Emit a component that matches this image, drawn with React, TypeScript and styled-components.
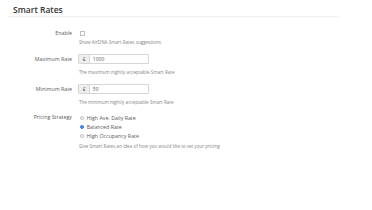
import React from "react";
import styled, { createGlobalStyle } from "styled-components";

const Global = createGlobalStyle`
  html, body { margin: 0; padding: 0; background: #fff; }
  body { font-family: "Open Sans", "Liberation Sans", sans-serif; color: #555; }
`;

const Page = styled.div`
  width: 372px;
  height: 210px;
  box-sizing: border-box;
  padding-top: 4px;
`;

const Header = styled.div`
  margin: 0 33px 0 8px;
  padding-left: 5px;
  border-bottom: 1px solid #f1f1f1;
  box-shadow: 0 1px 1px rgba(0, 0, 0, 0.015);
`;

const Title = styled.h1`
  margin: 0;
  font-size: 8.5px;
  line-height: 12px;
  font-weight: 600;
  color: #333;
`;

const Form = styled.div`
  display: grid;
  grid-template-columns: 72px 1fr;
  column-gap: 7px;
  padding-top: 12.3px;
  align-items: start;
`;

const Label = styled.div<{ $h: number }>`
  text-align: right;
  font-size: 5.3px;
  line-height: ${(p) => p.$h}px;
  color: #5a5a5a;
  white-space: nowrap;
`;

const Field = styled.div<{ $gap?: number }>`
  display: flex;
  flex-direction: column;
  align-items: flex-start;
  margin-bottom: ${(p) => p.$gap ?? 0}px;
`;

const Control = styled.div<{ $h: number }>`
  height: ${(p) => p.$h}px;
  display: flex;
  align-items: center;
`;

const Help = styled.div<{ $top: number }>`
  font-size: 4.6px;
  line-height: 8px;
  color: #858585;
  margin-top: ${(p) => p.$top}px;
  white-space: nowrap;
`;

const Check = styled.span`
  display: block;
  width: 3.2px;
  height: 3.2px;
  margin-left: 1px;
  border: 0.5px solid #bdbdbd;
  border-radius: 0.6px;
  background: #fff;
`;

const InputGroup = styled.div`
  display: flex;
  width: 71px;
  height: 10px;
  box-sizing: border-box;
  margin-left: -0.7px;
  border: 0.5px solid #d6d6d6;
  border-radius: 1px;
  overflow: hidden;
`;

const Addon = styled.span`
  width: 9.5px;
  flex: none;
  background: #efefef;
  border-right: 0.5px solid #d6d6d6;
  font-size: 5px;
  line-height: 9px;
  text-align: center;
  color: #555;
`;

const Value = styled.span`
  font-size: 5px;
  line-height: 9px;
  padding-left: 3px;
  color: #555;
`;

const Radios = styled.div`
  display: flex;
  flex-direction: column;
`;

const RadioRow = styled.label`
  display: flex;
  align-items: center;
  gap: 3px;
  height: 9.3px;
  font-size: 5.3px;
  color: #5a5a5a;
  white-space: nowrap;
`;

const Radio = styled.span<{ $on?: boolean }>`
  width: 4px;
  height: 4px;
  margin-left: 0.7px;
  border-radius: 50%;
  box-sizing: border-box;
  border: 0.5px solid ${(p) => (p.$on ? "#3d86e2" : "#bdbdbd")};
  background: ${(p) => (p.$on ? "#3d86e2" : "#fff")};
`;

export default function App() {
  return (
    <Page>
      <Global />
      <Header>
        <Title>Smart Rates</Title>
      </Header>
      <Form>
        <Label $h={8}>Enable</Label>
        <Field $gap={8}>
          <Control $h={8}>
            <Check />
          </Control>
          <Help $top={1}>Show AirDNA Smart Rates suggestions</Help>
        </Field>

        <Label $h={10}>Maximum Rate</Label>
        <Field $gap={8.6}>
          <Control $h={10}>
            <InputGroup>
              <Addon>£</Addon>
              <Value>1000</Value>
            </InputGroup>
          </Control>
          <Help $top={3.4}>The maximum nightly acceptable Smart Rate</Help>
        </Field>

        <Label $h={10}>Minimum Rate</Label>
        <Field $gap={7.3}>
          <Control $h={10}>
            <InputGroup>
              <Addon>£</Addon>
              <Value>50</Value>
            </InputGroup>
          </Control>
          <Help $top={3.4}>The minimum nightly acceptable Smart Rate</Help>
        </Field>

        <Label $h={9.3}>Pricing Strategy</Label>
        <Field>
          <Radios>
            <RadioRow><Radio />High Ave. Daily Rate</RadioRow>
            <RadioRow><Radio $on />Balanced Rate</RadioRow>
            <RadioRow><Radio />High Occupancy Rate</RadioRow>
          </Radios>
          <Help $top={1.1}>Give Smart Rates an idea of how you would like to set your pricing</Help>
        </Field>
      </Form>
    </Page>
  );
}
